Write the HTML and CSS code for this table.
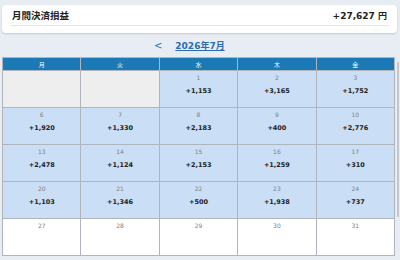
FILE: index.html
```html
<!DOCTYPE html>
<html lang="ja">
<head>
<meta charset="utf-8">
<link rel="stylesheet" href="styles.css">
</head>
<body>
<div class="page">
  <div class="card">
    <div class="card-row">
      <span class="card-title">月間決済損益</span>
      <span class="card-value">+27,627 円</span>
    </div>
  </div>
  <div class="nav">
    <span class="arrow">&lt;</span>
    <a class="month" href="#">2026年7月</a>
    <span class="arrow hidden">&gt;</span>
  </div>
  <div class="cal">
    <div class="hd">月</div><div class="hd">火</div><div class="hd">水</div><div class="hd">木</div><div class="hd">金</div>
    <div class="c empty"></div>
    <div class="c empty"></div>
    <div class="c on"><span class="d">1</span><span class="v">+1,153</span></div>
    <div class="c on"><span class="d">2</span><span class="v">+3,165</span></div>
    <div class="c on"><span class="d">3</span><span class="v">+1,752</span></div>
    <div class="c on"><span class="d">6</span><span class="v">+1,920</span></div>
    <div class="c on"><span class="d">7</span><span class="v">+1,330</span></div>
    <div class="c on"><span class="d">8</span><span class="v">+2,183</span></div>
    <div class="c on"><span class="d">9</span><span class="v">+400</span></div>
    <div class="c on"><span class="d">10</span><span class="v">+2,776</span></div>
    <div class="c on"><span class="d">13</span><span class="v">+2,478</span></div>
    <div class="c on"><span class="d">14</span><span class="v">+1,124</span></div>
    <div class="c on"><span class="d">15</span><span class="v">+2,153</span></div>
    <div class="c on"><span class="d">16</span><span class="v">+1,259</span></div>
    <div class="c on"><span class="d">17</span><span class="v">+310</span></div>
    <div class="c on"><span class="d">20</span><span class="v">+1,103</span></div>
    <div class="c on"><span class="d">21</span><span class="v">+1,346</span></div>
    <div class="c on"><span class="d">22</span><span class="v">+500</span></div>
    <div class="c on"><span class="d">23</span><span class="v">+1,938</span></div>
    <div class="c on"><span class="d">24</span><span class="v">+737</span></div>
    <div class="c"><span class="d">27</span></div>
    <div class="c"><span class="d">28</span></div>
    <div class="c"><span class="d">29</span></div>
    <div class="c"><span class="d">30</span></div>
    <div class="c"><span class="d">31</span></div>
  </div>
  <div class="scroll"></div>
</div>
</body>
</html>
```
FILE: styles.css
```css
html, body {
  margin: 0;
  padding: 0;
  background: #e8ecf3;
  font-family: "DejaVu Sans", "Noto Sans CJK JP", sans-serif;
}
.page {
  position: relative;
  width: 400px;
  height: 260px;
  padding-top: 5px;
  box-sizing: border-box;
}
.card {
  margin: 0 3px 0 2px;
  height: 28px;
  background: #fff;
  border-radius: 4px;
  box-shadow: 0 1px 2px rgba(0,0,0,0.15);
  padding: 0 8px;
  box-sizing: border-box;
}
.card-row {
  display: flex;
  justify-content: space-between;
  align-items: center;
  height: 20px;
  border-bottom: 1px solid #e3e5ea;
  padding: 0 2px;
}
.card-title {
  font-size: 9.5px;
  font-weight: bold;
  color: #222;
}
.card-value {
  font-size: 9px;
  font-weight: bold;
  color: #222;
}
.nav {
  display: flex;
  justify-content: center;
  align-items: center;
  gap: 13px;
  height: 24px;
  font-size: 9px;
  font-weight: bold;
  color: #2a6cb5;
}
.arrow {
  font-size: 10px;
  font-weight: normal;
}
.hidden {
  visibility: hidden;
}
.month {
  color: #2a6cb5;
  text-decoration: underline;
}
.cal {
  display: grid;
  grid-template-columns: repeat(5, 1fr);
  grid-template-rows: 12px repeat(5, 36px);
  gap: 1px;
  background: #b0b5bd;
  border: 1px solid #b0b5bd;
  margin: 0 5px 0 2px;
}
.hd {
  background: #1b79b5;
  color: #fff;
  font-size: 6px;
  display: flex;
  align-items: center;
  justify-content: center;
}
.c {
  background: #fff;
  display: flex;
  flex-direction: column;
  align-items: center;
  padding-top: 3px;
  box-sizing: border-box;
}
.c.empty {
  background: #eeeeee;
}
.c.on {
  background: #cadef5;
}
.d {
  font-size: 6px;
  color: #808080;
  line-height: 7px;
}
.v {
  margin-top: 6px;
  font-size: 6.5px;
  font-weight: bold;
  color: #222;
  line-height: 8px;
}
.scroll {
  position: absolute;
  right: 1px;
  top: 62px;
  width: 2px;
  height: 155px;
  background: #c4c6ca;
  border-radius: 1px;
}
```
